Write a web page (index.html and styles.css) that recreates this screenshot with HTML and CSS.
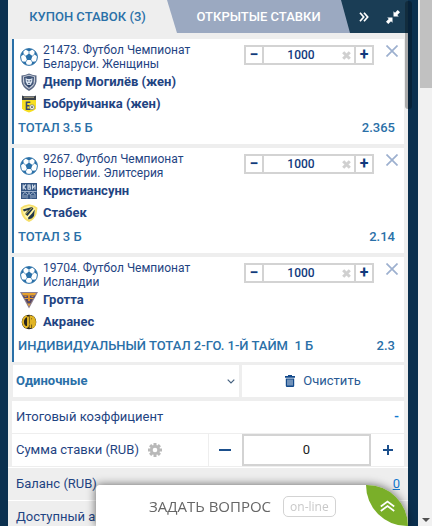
FILE: index.html
```html
<!DOCTYPE html>
<html lang="ru">
<head>
<meta charset="utf-8">
<meta name="viewport" content="width=device-width, initial-scale=1">
<title>Купон ставок</title>
<link rel="stylesheet" href="styles.css">
</head>
<body>
<svg class="sprite" aria-hidden="true">
  <symbol id="ball" viewBox="0 0 18 18">
    <circle cx="9" cy="9" r="8.4" fill="#fff" stroke="#2a70a8" stroke-width="1"/>
    <path fill="#2a70a8" d="M9 5.6l3.4 2.5-1.3 4H6.9l-1.3-4zM5.4 1.4Q9 .1 12.6 1.4L9 3.6zM.6 8.2Q1 5 3.2 2.9l.6 3.6zM17.4 8.2Q17 5 14.800 2.900l-.6 3.600zM2.200 13.400l3.600.400 1 3.200Q3.900 16.200 2.200 13.400zM15.800 13.400l-3.600.400-1 3.200q2.900-.8 4.600-3.600z"/>
    <path stroke="#2a70a8" stroke-width=".7" d="M9 3.400v2.400M3.600 6.300l2.200 1.900M14.400 6.300l-2.200 1.900M5.700 14l1.300-2M12.300 14L11 12"/>
  </symbol>
  <symbol id="cross" viewBox="0 0 12 12"><path d="M.5.5l11 11M11.500.5l-11 11" fill="none" stroke="#9db0cf" stroke-width="1.700"/></symbol>
  <symbol id="erase" viewBox="0 0 9 9"><path d="M1.200 1.200l6.600 6.600M7.800 1.200L1.200 7.800" fill="none" stroke="#d0d0d0" stroke-width="3"/></symbol>
</svg>
<main class="coupon">
  <header class="tabs">
    <button class="tab tab-active">КУПОН СТАВОК (3)</button>
    <button class="tab tab-open">ОТКРЫТЫЕ СТАВКИ</button>
    <button class="tool" aria-label="Вправо"><svg width="10" height="10" viewBox="0 0 10 10"><path d="M1 .8L4.700 5 1 9.200M5 .8L8.700 5 5 9.200" fill="none" stroke="#fff" stroke-width="1.700"/></svg></button>
    <button class="tool" aria-label="Свернуть"><svg width="14" height="14" viewBox="0 0 14 14"><path fill="#fff" d="M7.500 1.200l1.500 1.500L11.700 0 14 2.300 11.300 5l1.500 1.500H7.500zM6.500 12.800L5 11.300 2.300 14 0 11.700 2.700 9 1.200 7.500h5.300z"/></svg></button>
  </header>

  <section class="bets">
    <article class="bet">
      <div class="bet-head">
        <svg class="ball"><use href="#ball"/></svg>
        <p class="league">21473. Футбол Чемпионат Беларуси. Женщины</p>
        <div class="stepper"><button aria-label="Меньше">−</button><input aria-label="Сумма" value="1000"><button class="erase" aria-label="Стереть"><svg><use href="#erase"/></svg></button><button aria-label="Больше">+</button></div>
        <button class="close" aria-label="Удалить"><svg><use href="#cross"/></svg></button>
      </div>
      <div class="team">
        <svg viewBox="0 0 18 18"><path fill="#5b6a86" d="M1.500 2.500L5 2l4-1.500L13 2l3.500.5v6Q16 14 9 18 2 14 1.500 8.500z"/><path fill="#c7ccd8" d="M3 3.500l6-1.800 6 1.800v5Q14.500 13 9 16 3.500 13 3 8.500z"/><path fill="#425779" d="M4 4l5-1.300L14 4l-.5 7L9 15 4.500 11z"/><path fill="#d9e3ef" d="M5.500 5l2 1h3l2-1-.3 4L10.500 12h-3L5.800 9z"/><path fill="#263b61" d="M6.500 7l2 .8L8 9zM11.500 7l-2 .8.5 1.200zM8 10h2l-1 1.500zM6.500 12h5L9 14z"/></svg>
        <span>Днепр Могилёв (жен)</span></div>
      <div class="team">
        <svg viewBox="0 0 18 18"><path fill="#39404a" d="M2 .5l2 .8h10l2-.8v4.500H2z"/><path fill="#f7df22" d="M2 5h14v8.500Q15 15.500 9 17.500 3 15.500 2 13.500z"/><path stroke="#938d76" stroke-width="1" d="M4 2.500h10"/><path fill="none" stroke="#36486d" stroke-width="1.600" d="M10.300 7.300H6.500v7h4M6.500 10.700h3"/><circle cx="12" cy="12.200" r="2.500" fill="#f3f2df" stroke="#5e6b78" stroke-width=".6"/><path fill="#4b5968" d="M12 11l1 .8-.4 1.200h-1.200l-.4-1.200z"/></svg>
        <span>Бобруйчанка (жен)</span></div>
      <div class="market"><span>ТОТАЛ 3.5 Б</span><span>2.365</span></div>
    </article>

    <article class="bet">
      <div class="bet-head">
        <svg class="ball"><use href="#ball"/></svg>
        <p class="league">9267. Футбол Чемпионат Норвегии. Элитсерия</p>
        <div class="stepper"><button aria-label="Меньше">−</button><input aria-label="Сумма" value="1000"><button class="erase" aria-label="Стереть"><svg><use href="#erase"/></svg></button><button aria-label="Больше">+</button></div>
        <button class="close" aria-label="Удалить"><svg><use href="#cross"/></svg></button>
      </div>
      <div class="team">
        <svg viewBox="0 0 18 18"><path fill="#345481" d="M1 1h16v16H1z"/><path fill="none" stroke="#d4deeb" stroke-width="1.100" d="M3.200 2.500v5M6 2.500L3.500 5 6 7.500M8 2.500v5M8 3h2v2H8h2.300v2.200H8M12.500 2.500v5M12.500 6.500L15 3M15 2.500v5"/><path fill="none" stroke="#a9bbd3" stroke-width=".9" d="M1.500 9.500h15M3 16v-4l2-1.500L7 12M11 12l2-1.500 2 1.500v4M5 16v-3M13 16v-3M7 16.500V13q2-3 4 0v3.500M9 10v1.500"/></svg>
        <span>Кристиансунн</span></div>
      <div class="team">
        <svg viewBox="0 0 18 18"><path fill="#f6df69" d="M4 1.500L9 .3l5 1.200 3.500 2.200-1 6.300Q15 15 9 18 3 15 1.500 10L.5 3.700z"/><path fill="#fff4a7" d="M4 3.500l5-1.700 5 1.700 1.500 1-1 5Q13 14 9 16 5 14 3.500 9.500l-1-5z"/><path fill="#23374a" d="M2.700 5.500L12 3l1.500 1.500L7.500 12 5 10l3-4-4 1.500zM14.800 5.500L14 12l-2 2.200-3.500 1.300-.5-1.800 4-4.200z"/><path stroke="#f8df52" stroke-width=".8" d="M4.500 11L12.300 3.500"/></svg>
        <span>Стабек</span></div>
      <div class="market"><span>ТОТАЛ 3 Б</span><span>2.14</span></div>
    </article>

    <article class="bet">
      <div class="bet-head">
        <svg class="ball"><use href="#ball"/></svg>
        <p class="league">19704. Футбол Чемпионат Исландии</p>
        <div class="stepper"><button aria-label="Меньше">−</button><input aria-label="Сумма" value="1000"><button class="erase" aria-label="Стереть"><svg><use href="#erase"/></svg></button><button aria-label="Больше">+</button></div>
        <button class="close" aria-label="Удалить"><svg><use href="#cross"/></svg></button>
      </div>
      <div class="team">
        <svg viewBox="0 0 18 18"><path fill="#8b7f95" d="M0 1h18L9 17.500z"/><path fill="#e6a12d" d="M2 2h14L9 15.500z"/><path fill="#54486b" d="M2.500 4.500h13L14 7H4zM5 8h3l1 2.500L10 8h3l-2.500 4.500h-3z"/><path fill="#d98c2c" d="M8 4h2v6H8zM4.500 5h2v1h-2zM11.500 5h2v1h-2z"/></svg>
        <span>Гротта</span></div>
      <div class="team">
        <svg viewBox="0 0 18 18"><circle cx="9" cy="9" r="7.300" fill="#29251c"/><path fill="none" stroke="#e2b525" stroke-width="1.900" d="M7 3.200Q3 4.800 3 9t4 5.800M8 3.500v9q0 1.700-2 1.500M10.500 15V3.500Q15 4.800 15 9t-2 5V6l-2.500 4.500H15"/></svg>
        <span>Акранес</span></div>
      <div class="market"><span>ИНДИВИДУАЛЬНЫЙ ТОТАЛ 2-ГО. 1-Й ТАЙМ &nbsp;1 Б</span><span>2.3</span></div>
    </article>
  </section>

  <div class="actions">
    <div class="kind">
      <select aria-label="Тип ставки"><option>Одиночные</option></select>
      <svg width="8" height="5" viewBox="0 0 8 5"><path d="M.7.7L4 4 7.300.7" fill="none" stroke="#45617f" stroke-width="1.200"/></svg>
    </div>
    <button class="clear">
      <svg width="10" height="12" viewBox="0 0 10 12"><path fill="#134a8b" d="M3 0h4v1h3v1.800H0V1h3zM.8 3.500h8.400v7.300q0 1.200-1.200 1.200H2Q.8 12 .8 10.800z"/><path stroke="#fff" stroke-width=".8" d="M3 4.500v6M5 4.500v6M7 4.500v6"/></svg>
      Очистить</button>
  </div>

  <section class="summary">
    <div class="line total"><span>Итоговый коэффициент</span><b>-</b></div>
    <div class="line stake">
      <label for="sum">Сумма ставки (RUB)
        <svg width="14" height="14" viewBox="0 0 14 14"><g stroke="#b9b9b9" stroke-width="3"><path d="M7 0v14M0 7h14M2.100 2.100l9.800 9.800M11.900 2.100l-9.800 9.800"/></g><circle cx="7" cy="7" r="5" fill="#b9b9b9"/><circle cx="7" cy="7" r="2.300" fill="#fff"/></svg>
      </label>
      <button aria-label="Меньше"><svg width="12" height="12" viewBox="0 0 12 12"><path d="M0 6h12" stroke="#1b4f8c" stroke-width="2"/></svg></button>
      <input id="sum" value="0">
      <button aria-label="Больше"><svg width="10" height="10" viewBox="0 0 10 10"><path d="M0 5h10M5 0v10" stroke="#1b4f8c" stroke-width="2"/></svg></button>
    </div>
  </section>
  <section class="funds">
    <div class="line"><span>Баланс (RUB)</span><a href="#">0</a></div>
    <div class="line"><span>Доступный аванс</span></div>
  </section>
  <div class="inner-thumb"></div>
</main>
<aside class="page-scroll">
  <div class="thumb"></div>
  <svg width="8" height="4" viewBox="0 0 8 4"><path d="M0 0h8L4 4z" fill="#505050"/></svg>
</aside>
<div class="chat">
  <span class="ask">ЗАДАТЬ ВОПРОС</span>
  <span class="online">on-line</span>
  <button class="leaf" aria-label="Развернуть"><svg width="15" height="12" viewBox="0 0 15 12"><path d="M.8 6.500l6.700-5 6.700 5M.8 11l6.700-5 6.700 5" fill="none" stroke="#fff" stroke-width="1.700"/></svg></button>
</div>
</body>
</html>
```
FILE: styles.css
```css
* {
  box-sizing: border-box;
}

body {
  margin: 0;
  height: 100vh;
  overflow: hidden;
  display: flex;
  background: #0b304f;
  color: #1f4482;
  font: 13px/14px Roboto, "Liberation Sans", sans-serif;
}

button,
input,
select {
  margin: 0;
  padding: 0;
  border: 0;
  background: none;
  color: inherit;
  font: inherit;
  min-width: 0;
}

svg {
  display: block;
  flex: none;
}

p {
  margin: 0;
}

.sprite {
  position: absolute;
  width: 0;
  height: 0;
}

.coupon {
  position: relative;
  flex: 1;
  margin: 0 10px 0 8px;
  background: #eee;
}

.tabs {
  display: flex;
  height: 33px;
  background: linear-gradient(90deg, #eee 50%, #1a3d55 50%);
}

.tab {
  font-weight: 500;
}

.tab-active {
  flex: 0 0 159px;
  color: #2a70a8;
}

.tab-open {
  flex: 1;
  background: #9ba9c1;
  color: #fff;
  clip-path: polygon(0 0, calc(100% - 9px) 0, 100% 100%, 10px 100%);
}

.tool {
  display: flex;
  align-items: center;
  justify-content: center;
  width: 28px;
}

.tool:last-child {
  width: 30px;
}

.bets {
  display: flex;
  flex-direction: column;
  gap: 4px;
  padding: 6px 4px 3px;
}

.bet {
  padding: 4px 9px 3px 4px;
  border-left: 2px solid #2a70a8;
  background: #fff;
}

.bet-head {
  display: flex;
  align-items: flex-start;
  height: 28px;
}

.ball {
  width: 18px;
  height: 18px;
  margin: 5px 5px 0 2px;
}

.league {
  width: 160px;
  font-size: 12px;
}

.stepper {
  display: flex;
  width: 130px;
  height: 20px;
  margin: 2px 12px 0 auto;
  border: 2px solid #d3d3d3;
  color: #123a7c;
  font-size: 12px;
  font-weight: 500;
}

.stepper button {
  display: flex;
  align-items: center;
  justify-content: center;
  width: 18px;
  border-right: 2px solid #d3d3d3;
  font-size: 16px;
  font-weight: 700;
}

.stepper button:last-child {
  width: 16px;
  border: 0;
}

.stepper input {
  flex: 1;
  text-align: center;
}

.stepper .erase svg {
  width: 9px;
  height: 9px;
}

.close {
  margin-top: 2px;
  margin-right: -3px;
}

.close svg {
  width: 12px;
  height: 12px;
}

.team {
  display: flex;
  align-items: center;
  gap: 5px;
  height: 22px;
  padding-left: 2px;
  font-weight: 700;
}

.team svg {
  width: 18px;
  height: 18px;
}

.market {
  display: flex;
  align-items: center;
  justify-content: space-between;
  height: 26px;
  color: #2a70a8;
  font-weight: 500;
}

.actions {
  display: grid;
  grid-template-columns: 226fr 162fr;
  gap: 3px;
  height: 32px;
  padding: 0 4px 0 5px;
}

.kind {
  display: flex;
  align-items: center;
  padding: 0 4px 0 3px;
  background: #fff;
  color: #2a70a8;
  font-weight: 700;
}

.kind select {
  appearance: none;
  flex: 1;
  height: 32px;
}

.clear {
  display: flex;
  align-items: center;
  justify-content: center;
  gap: 8px;
  background: #fff;
  color: #2a5a94;
}

.summary {
  padding: 4px 4px 0;
}

.line {
  display: flex;
  align-items: center;
  justify-content: space-between;
  height: 33px;
}

.summary .line {
  background: #fff;
  border-bottom: 1px solid #eee;
}

.total {
  padding: 0 5px 0 4px;
}

.total b,
.funds a {
  color: #1278cf;
}

.stake label {
  display: flex;
  align-items: center;
  gap: 9px;
  align-self: stretch;
  flex: 197;
  padding-left: 4px;
  border-right: 1px solid #eee;
}

.stake button {
  display: flex;
  align-items: center;
  justify-content: center;
  width: 33px;
}

.stake input {
  flex: 129;
  align-self: stretch;
  border: 2px solid #d3d3d3;
  color: #222;
  text-align: center;
}

.funds .line {
  padding: 0 8px;
  border-top: 1px solid #fff;
}

.inner-thumb {
  position: absolute;
  top: 1px;
  right: -4px;
  width: 7px;
  height: 108px;
  border-radius: 3px;
  background: rgba(0, 0, 0, 0.28);
}

.page-scroll {
  display: flex;
  flex-direction: column;
  align-items: center;
  justify-content: space-between;
  width: 14px;
  padding: 0 0 4px 2px;
  background: #f1f1f1;
}

.thumb {
  align-self: stretch;
  height: 88px;
  background: #c1c1c1;
}

.chat {
  position: fixed;
  right: 24px;
  bottom: 0;
  display: flex;
  align-items: center;
  width: 312px;
  height: 41px;
  padding-left: 53px;
  border-radius: 4px 42px 0 0;
  background: #fff;
  box-shadow: 0 0 10px rgba(0, 0, 0, 0.6);
  color: #666;
}

.ask {
  font: 15px/20px "Open Sans", sans-serif;
  white-space: nowrap;
}

.online {
  margin: 2px 0 0 12px;
  padding: 0 6px;
  border: 1px solid #d3d3d3;
  border-radius: 5px;
  color: #c8c8c8;
  font: 12px/19px "Open Sans", sans-serif;
}

.leaf {
  display: flex;
  align-items: center;
  justify-content: center;
  width: 42px;
  height: 41px;
  margin-left: auto;
  border-radius: 0 42px;
  background: #7aaf29;
}
```
